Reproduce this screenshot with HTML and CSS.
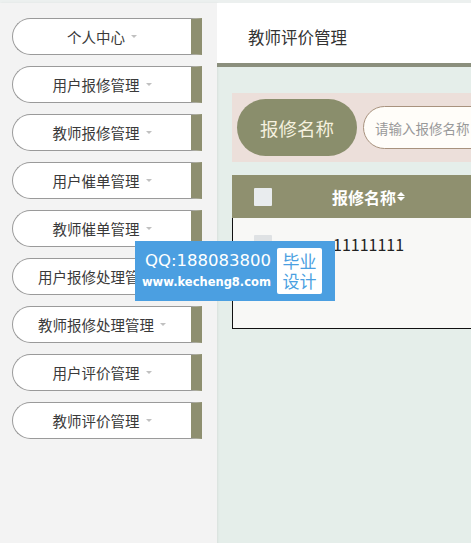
FILE: index.html
```html
<!DOCTYPE html>
<html>
<head>
  <meta charset="UTF-8">
  <title>教师评价管理</title>
  <link rel="stylesheet" href="styles.css">
</head>
<body>
  <div class="layout">
    <!-- 左侧菜单 -->
    <div class="sidebar">
      <div class="menu-item">个人中心<span class="caret"></span></div>
      <div class="menu-item">用户报修管理<span class="caret"></span></div>
      <div class="menu-item">教师报修管理<span class="caret"></span></div>
      <div class="menu-item">用户催单管理<span class="caret"></span></div>
      <div class="menu-item">教师催单管理<span class="caret"></span></div>
      <div class="menu-item">用户报修处理管理<span class="caret"></span></div>
      <div class="menu-item">教师报修处理管理<span class="caret"></span></div>
      <div class="menu-item">用户评价管理<span class="caret"></span></div>
      <div class="menu-item">教师评价管理<span class="caret"></span></div>
    </div>

    <div class="main">
      <div class="header">教师评价管理</div>
      <div class="content">
        <div class="search-box">
          <button class="search-label">报修名称</button>
          <input class="search-input" type="text" placeholder="请输入报修名称">
        </div>

        <div class="table-wrap">
          <div class="table-head">
            <div class="col-check"><span class="checkbox"></span></div>
            <div class="col-name">报修名称<span class="sort"><i class="up"></i><i class="down"></i></span></div>
          </div>
          <div class="table-body">
            <div class="row">
              <div class="col-check"><span class="checkbox light"></span></div>
              <div class="col-name">11111111</div>
            </div>
          </div>
        </div>
      </div>
    </div>
  </div>

  <div class="watermark">
    <div class="wm-text">
      <div class="wm-qq">QQ:188083800</div>
      <div class="wm-url">www.kecheng8.com</div>
    </div>
    <div class="wm-badge">毕业<br>设计</div>
  </div>
</body>
</html>
```

FILE: styles.css
```css
body {
  margin: 0;
  font-family: "Noto Sans CJK SC", "Liberation Sans", sans-serif;
  background: #e5eeea;
  overflow: hidden;
}

.layout {
  display: flex;
  height: 543px;
  border-top: 3px solid #ecf0ef;
}

.sidebar {
  width: 217px;
  flex-shrink: 0;
  background: #f3f3f3;
  box-shadow: 1px 0 2px rgba(0, 0, 0, 0.06);
  padding: 15px 0 0 12px;
  box-sizing: border-box;
  display: flex;
  flex-direction: column;
  gap: 11px;
}

.menu-item {
  width: 190px;
  height: 37px;
  box-sizing: border-box;
  background: #fff;
  border: 1px solid #9a9a9a;
  border-right: 11px solid #8e8f70;
  border-radius: 19px 0 0 19px;
  display: flex;
  align-items: center;
  justify-content: center;
  font-size: 14.5px;
  color: #3a3a3a;
}

.caret {
  display: inline-block;
  margin-left: 6px;
  border-left: 3px solid transparent;
  border-right: 3px solid transparent;
  border-top: 3px solid #c0c0c0;
}

.main {
  width: 600px;
  flex-shrink: 0;
}

.header {
  height: 64px;
  box-sizing: border-box;
  padding: 7px 0 0 31px;
  background: #fff;
  border-bottom: 4px solid #8b8f7d;
  display: flex;
  align-items: center;
  font-size: 16.5px;
  color: #333;
}

.content {
  padding: 26px 0 0 15px;
}

.search-box {
  height: 69px;
  background: #ecdfda;
  display: flex;
  align-items: center;
  padding-left: 5px;
  gap: 6px;
}

.search-label {
  width: 120px;
  height: 57px;
  border: none;
  border-radius: 29px;
  background: #8a8e6c;
  color: #f5f1df;
  font-family: inherit;
  font-size: 18.5px;
}

.search-input {
  width: 220px;
  height: 43px;
  box-sizing: border-box;
  border: 1px solid #a8927e;
  border-radius: 22px;
  background: #fffdf9;
  padding-left: 11px;
  font-family: inherit;
  font-size: 13.5px;
}

.search-input::placeholder {
  color: #999;
}

.table-wrap {
  margin-top: 13px;
}

.table-head {
  height: 43px;
  background: #8f906f;
  display: flex;
  align-items: center;
  color: #fff;
  font-weight: bold;
  font-size: 16px;
}

.col-check {
  width: 100px;
  padding-left: 22px;
  box-sizing: border-box;
  display: flex;
  align-items: center;
}

.col-name {
  display: flex;
  align-items: center;
}

.checkbox {
  width: 18px;
  height: 18px;
  background: #e9ecee;
  border-radius: 1px;
}

.checkbox.light {
  background: #dfe2e4;
}

.sort {
  display: inline-flex;
  flex-direction: column;
  gap: 1px;
  margin-left: 1px;
}

.sort i {
  display: block;
  border-left: 4px solid transparent;
  border-right: 4px solid transparent;
}

.sort .up {
  border-bottom: 4px solid #fff;
}

.sort .down {
  border-top: 4px solid #fff;
}

.table-body {
  height: 110px;
  background: #f8f8f6;
  border-left: 1px solid #111;
  border-bottom: 1px solid #111;
}

.row {
  height: 52px;
  display: flex;
  align-items: center;
  font-size: 16px;
  color: #222;
}

.row .col-check {
  padding-left: 21px;
}

.watermark {
  position: absolute;
  left: 135px;
  top: 241px;
  width: 200px;
  height: 60px;
  background: #4b9fe1;
  display: flex;
  align-items: center;
  box-sizing: border-box;
  padding-left: 7px;
}

.wm-text {
  color: #fff;
  font-family: "DejaVu Sans", sans-serif;
}

.wm-qq {
  font-size: 16.5px;
  line-height: 22px;
  padding-left: 3px;
}

.wm-url {
  font-size: 11.5px;
  font-weight: bold;
  line-height: 20px;
}

.wm-badge {
  margin-left: 6px;
  width: 45px;
  height: 46px;
  background: #fff;
  color: #4b9fe1;
  font-size: 17px;
  line-height: 20px;
  text-align: center;
  display: flex;
  align-items: center;
  justify-content: center;
  border-radius: 2px;
}
```
